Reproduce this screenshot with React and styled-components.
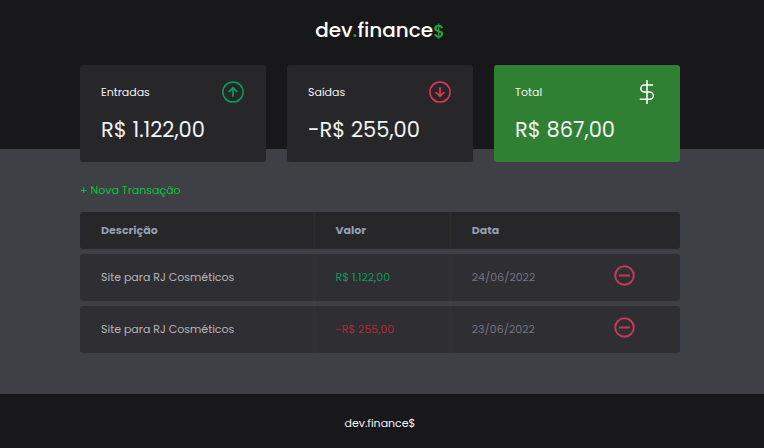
import React from "react";
import styled, { createGlobalStyle } from "styled-components";

const GlobalStyle = createGlobalStyle`
  * { box-sizing: border-box; margin: 0; padding: 0; }
  html { background: #18181a; }
  body {
    background: #3f4045;
    font-family: Poppins, Inter, "Noto Sans", sans-serif;
    font-size: 11px;
    line-height: 16px;
    color: #f0f2f5;
  }
  button { font: inherit; }
`;

const Page = styled.div`
  min-height: 100vh;
  display: flex;
  flex-direction: column;
`;

const Header = styled.header`
  display: flex;
  justify-content: center;
  height: 149px;
  padding: 14px 4px 0 0;
  background: #18181a;
`;

const Logo = styled.h1`
  font-size: 20px;
  line-height: 32px;
  font-weight: 500;
  color: #fff;
`;

const LogoAccent = styled.span`
  color: #22a637;
`;

const LogoSign = styled(LogoAccent)`
  font-size: 18px;
`;

const Main = styled.main`
  flex: 1;
  padding: 0 84px 0 80px;
`;

const Cards = styled.section`
  display: grid;
  grid-template-columns: repeat(3, 1fr);
  gap: 21px;
  margin-top: -84px;
`;

const Card = styled.article`
  padding: 15px 21px 16px;
  border-radius: 3px;
  background: ${({ $highlight }) => ($highlight ? "#308033" : "#272729")};
`;

const CardTop = styled.div`
  display: flex;
  align-items: center;
  justify-content: space-between;
  height: 24px;
`;

const CardTitle = styled.h2`
  font-size: 11px;
  font-weight: 400;
`;

const CardValue = styled.p`
  margin-top: 10px;
  font-size: 21px;
  line-height: 32px;
`;

const Icon = styled.svg`
  display: block;
  fill: none;
  stroke: ${({ $color }) => $color};
`;

const NewLink = styled.a`
  display: inline-block;
  margin-top: 20px;
  color: #00c83c;
  text-decoration: none;
`;

const Table = styled.table`
  width: 100%;
  margin-top: 9px;
  border-spacing: 0 5px;
  table-layout: fixed;
`;

const Col = styled.col`
  width: ${({ $width }) => $width};
`;

const Cell = styled.td`
  height: 47px;
  padding: 0 21px 2px;
  text-align: left;
  background: #2f2e33;
  color: ${({ $color }) => $color || "#b6b6b9"};
  border-right: 1px solid #333238;
  &:nth-child(n + 3) { border-right: 0; }
  &:first-child { border-radius: 3px 0 0 3px; }
  &:last-child { border-radius: 0 3px 3px 0; }
`;

const HeadCell = styled(Cell)`
  height: 37px;
  background: #272729;
  border-color: #2d2d30;
  color: #969cb3;
  font-weight: 700;
`;

const RemoveButton = styled.button`
  display: block;
  margin-bottom: 2px;
  border: 0;
  background: none;
  cursor: pointer;
`;

const Footer = styled.footer`
  height: 54px;
  padding: 21px 4px 0 0;
  text-align: center;
  background: #18181a;
`;

const ArrowIcon = ({ down, color }) => (
  <Icon $color={color} width="24" height="24" viewBox="0 0 24 24" aria-hidden="true">
    <circle cx="12" cy="12" r="10.1" strokeWidth="1.5" />
    <path
      d={down ? "M12 7.2v9M7.7 12l4.3 4.2 4.3-4.2" : "M12 16.8v-9M7.7 12L12 7.8l4.3 4.2"}
      strokeWidth="1.7"
    />
  </Icon>
);

const DollarIcon = () => (
  <Icon $color="#fff" width="24" height="24" viewBox="0 0 24 24" aria-hidden="true">
    <path
      d="M12 .5v23M17.5 5H9.3a3.5 3.5 0 0 0 0 7h5.4a3.6 3.6 0 0 1 0 7.2H5.3"
      strokeWidth="1.5"
      strokeLinecap="round"
      strokeLinejoin="round"
    />
  </Icon>
);

const MinusIcon = () => (
  <Icon $color="#c23a57" width="21" height="21" viewBox="0 0 21 21" aria-hidden="true">
    <circle cx="10.5" cy="10.5" r="9.3" strokeWidth="2" />
    <path d="M5 10.5h11" strokeWidth="2" />
  </Icon>
);

const cards = [
  { title: "Entradas", value: "R$ 1.122,00", icon: <ArrowIcon color="#00a35c" /> },
  { title: "Saídas", value: "-R$ 255,00", icon: <ArrowIcon down color="#e83558" /> },
  { title: "Total", value: "R$ 867,00", icon: <DollarIcon />, highlight: true },
];

const transactions = [
  { description: "Site para RJ Cosméticos", amount: "R$ 1.122,00", date: "24/06/2022", color: "#079a61" },
  { description: "Site para RJ Cosméticos", amount: "-R$ 255,00", date: "23/06/2022", color: "#ae2b38" },
];

export default function App() {
  return (
    <Page>
      <GlobalStyle />
      <Header>
        <Logo>
          dev<LogoAccent>.</LogoAccent>finance<LogoSign>$</LogoSign>
        </Logo>
      </Header>
      <Main>
        <Cards>
          {cards.map((card) => (
            <Card key={card.title} $highlight={card.highlight}>
              <CardTop>
                <CardTitle>{card.title}</CardTitle>
                {card.icon}
              </CardTop>
              <CardValue>{card.value}</CardValue>
            </Card>
          ))}
        </Cards>
        <NewLink href="#nova">+ Nova Transação</NewLink>
        <Table>
          <colgroup>
            <Col $width="39.1%" />
            <Col $width="22.7%" />
            <Col $width="23.7%" />
            <Col $width="14.5%" />
          </colgroup>
          <thead>
            <tr>
              <HeadCell as="th" scope="col">Descrição</HeadCell>
              <HeadCell as="th" scope="col">Valor</HeadCell>
              <HeadCell as="th" scope="col">Data</HeadCell>
              <HeadCell />
            </tr>
          </thead>
          <tbody>
            {transactions.map((item) => (
              <tr key={item.date}>
                <Cell>{item.description}</Cell>
                <Cell $color={item.color}>{item.amount}</Cell>
                <Cell $color="#737482">{item.date}</Cell>
                <Cell>
                  <RemoveButton type="button" aria-label="Remover transação">
                    <MinusIcon />
                  </RemoveButton>
                </Cell>
              </tr>
            ))}
          </tbody>
        </Table>
      </Main>
      <Footer>dev.finance$</Footer>
    </Page>
  );
}
